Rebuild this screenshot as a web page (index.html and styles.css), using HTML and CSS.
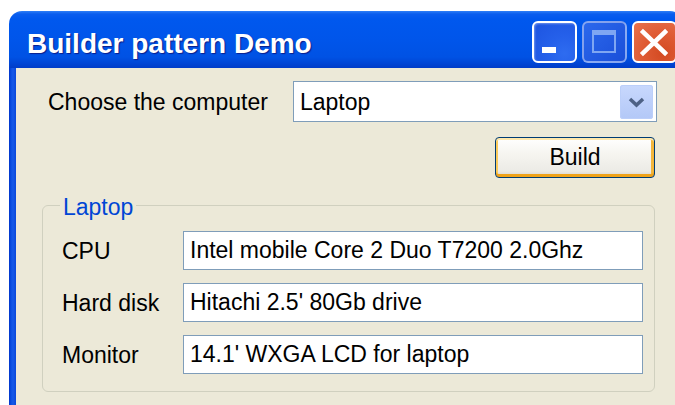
FILE: index.html
```html
<!DOCTYPE html>
<html lang="en">
<head>
<meta charset="utf-8">
<title>Builder pattern Demo</title>
<link rel="stylesheet" href="styles.css">
</head>
<body>
<div class="window">
  <div class="titlebar">
    <div class="title">Builder pattern Demo</div>
    <div class="controls">
      <div class="cbtn minimize">
        <svg width="45" height="42" viewBox="0 0 45 42"><rect x="10" y="26" width="14" height="6" fill="#fff"/></svg>
      </div>
      <div class="cbtn maximize">
        <svg width="45" height="42" viewBox="0 0 45 42"><rect x="11" y="10" width="22" height="21" fill="none" stroke="#7FA6F2" stroke-width="2"/><rect x="11" y="10" width="22" height="4" fill="#7FA6F2"/></svg>
      </div>
      <div class="cbtn close">
        <svg width="45" height="42" viewBox="0 0 45 42"><path d="M11 11 L33 32 M33 11 L11 32" stroke="#fff" stroke-width="4.5" stroke-linecap="square"/></svg>
      </div>
    </div>
  </div>
  <div class="frame">
    <div class="client">
      <div class="choose-row">
        <span class="label">Choose the computer</span>
        <div class="combo">
          <span class="combo-value">Laptop</span>
          <span class="combo-arrow">
            <svg width="33" height="34" viewBox="0 0 33 34"><path d="M10 14 L16.5 20 L23 14" fill="none" stroke="#4D6185" stroke-width="3.5"/></svg>
          </span>
        </div>
      </div>
      <div class="build-row">
        <button class="build">Build</button>
      </div>
      <fieldset class="group">
        <legend>Laptop</legend>
        <div class="specs">
          <span class="label">CPU</span>
          <div class="textbox">Intel mobile Core 2 Duo T7200 2.0Ghz</div>
          <span class="label">Hard disk</span>
          <div class="textbox">Hitachi 2.5' 80Gb drive</div>
          <span class="label">Monitor</span>
          <div class="textbox">14.1' WXGA LCD for laptop</div>
        </div>
      </fieldset>
    </div>
  </div>
</div>
</body>
</html>
```
FILE: styles.css
```css
html, body {
  margin: 0;
  padding: 0;
  background: #fff;
  overflow: hidden;
  height: 405px;
}

body {
  font-family: "Liberation Sans", Arial, sans-serif;
  font-size: 23px;
  color: #000;
}

.window {
  margin: 11px 0 0 9px;
  width: 674px;
  height: 394px;
  display: flex;
  flex-direction: column;
}

/* Luna-style caption bar */
.titlebar {
  height: 57px;
  flex: none;
  display: flex;
  align-items: flex-start;
  padding: 0 6px 0 18px;
  border-radius: 13px 13px 0 0;
  background: linear-gradient(to bottom,
    #2E7FF6 0px, #0A5DEE 3px, #0058EE 8px, #0055EA 30px,
    #0052E4 46px, #0046D6 52px, #003CC8 57px);
}

.title {
  flex: 1;
  margin-top: 17px;
  color: #fff;
  font-weight: bold;
  font-size: 28px;
  line-height: 32px;
  text-shadow: 1px 1px 1px #0A1E8C;
  white-space: nowrap;
}

.controls {
  display: flex;
  gap: 5px;
  margin-top: 10px;
}

.cbtn {
  width: 45px;
  height: 42px;
  box-sizing: border-box;
  border-radius: 6px;
  border: 2px solid #fff;
  overflow: hidden;
  display: flex;
  align-items: center;
  justify-content: center;
}

.cbtn svg {
  display: block;
  flex: none;
}

.minimize {
  background: radial-gradient(circle at 75% 80%, #2E6CF0 0%, #2560EA 40%, #1D54E0 100%);
  box-shadow: inset 1px 1px 2px rgba(255, 255, 255, 0.35);
}

.maximize {
  border-color: rgba(255, 255, 255, 0.45);
  background: linear-gradient(135deg, #2C68EC, #1A4FD9);
}

.close {
  background: radial-gradient(circle at 70% 80%, #D34A22 0%, #DE5A33 45%, #E8724E 100%);
}

/* window frame and client area */
.frame {
  flex: 1;
  display: flex;
  padding-left: 7px;
  background: linear-gradient(to right, #0033C9 0px, #0A4EE2 2px, #1659E8 4px, #0A48DA 7px);
}

.client {
  flex: 1;
  background: #ECE9D8;
  padding: 13px 0 0 26px;
  display: flex;
  flex-direction: column;
  align-items: flex-start;
}

.choose-row {
  display: grid;
  grid-template-columns: 245px 364px;
  align-items: center;
  padding-left: 6px;
}

.label {
  white-space: nowrap;
  line-height: 26px;
}

.combo {
  height: 41px;
  box-sizing: border-box;
  border: 1px solid #7F9DB9;
  background: #fff;
  display: flex;
  align-items: center;
  justify-content: space-between;
  padding: 0 3px 0 6px;
}

.combo-value {
  line-height: 26px;
}

.combo-arrow {
  width: 33px;
  height: 34px;
  box-sizing: border-box;
  border-radius: 3px;
  background: linear-gradient(to bottom, #C8D8FD, #B3C8F7);
  box-shadow: inset 0 0 0 1px #BCCFF9;
  display: flex;
  align-items: center;
  justify-content: center;
}

.combo-arrow svg {
  display: block;
}

.build-row {
  width: 613px;
  display: flex;
  justify-content: flex-end;
  margin-top: 15px;
}

.build {
  width: 160px;
  height: 41px;
  margin: 0;
  padding: 0;
  font-family: inherit;
  font-size: 23px;
  color: #000;
  border: 1px solid #003C74;
  border-radius: 4px;
  background: linear-gradient(to bottom, #FFFFFF 0%, #F6F5F0 40%, #ECEBE6 85%, #D6D0C5 100%);
  box-shadow:
    inset 0 2px 0 #FFE8AC,
    inset 0 -3px 0 #EFA31A,
    inset 2px 0 0 #FBCB5C,
    inset -3px 0 0 #F3B63C;
}

/* group box */
.group {
  margin: 12px 0 0 0;
  width: 613px;
  box-sizing: border-box;
  border: 1px solid #D0D0BF;
  border-radius: 6px;
  padding: 11px 11px 17px 19px;
  min-width: 0;
}

.group legend {
  padding: 4px 3px 0;
  margin-left: -2px;
  line-height: 26px;
  color: #0046D5;
}

.specs {
  display: grid;
  grid-template-columns: 121px 460px;
  grid-auto-rows: 39px;
  row-gap: 13px;
  align-items: center;
}

.textbox {
  height: 39px;
  box-sizing: border-box;
  border: 1px solid #7F9DB9;
  background: #fff;
  padding-left: 6px;
  line-height: 37px;
  white-space: nowrap;
}
```
